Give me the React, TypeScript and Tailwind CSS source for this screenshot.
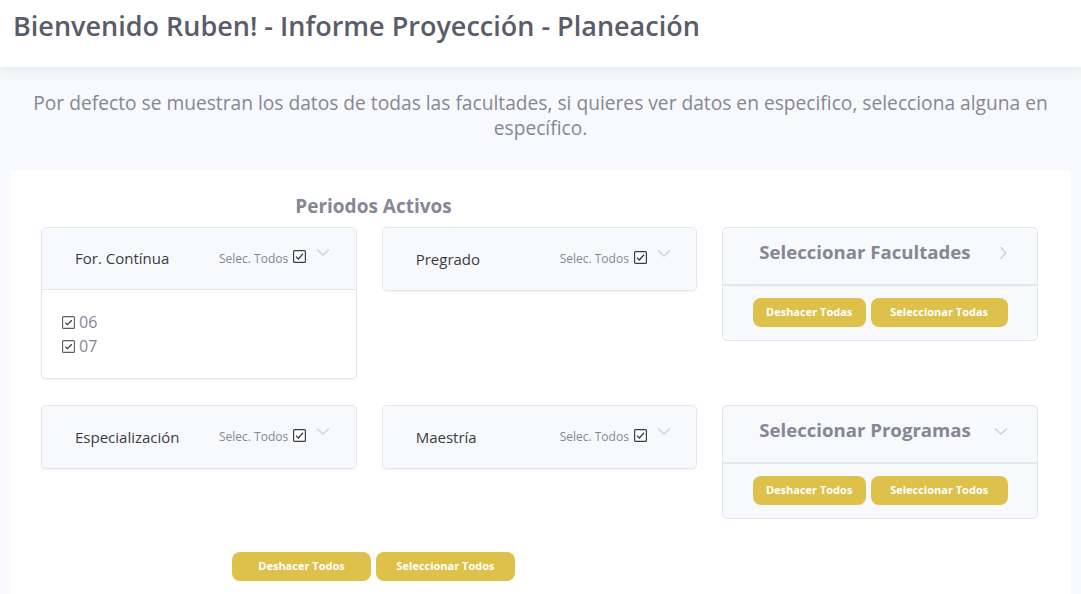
import React from "react";

const font = { fontFamily: "'Open Sans', 'Noto Sans', sans-serif" };

function Check() {
  return (
    <svg width="13" height="13" viewBox="0 0 13 13" className="shrink-0">
      <rect x="0.6" y="0.6" width="11.8" height="11.8" rx="1" fill="white" stroke="#3a3b45" strokeWidth="1.2" />
      <path d="M3 6.6 L5.4 9 L10 3.8" fill="none" stroke="#3a3b45" strokeWidth="1.3" />
    </svg>
  );
}

function SmallCheck() {
  return (
    <svg width="13" height="13" viewBox="0 0 13 13" className="shrink-0">
      <rect x="0.6" y="0.6" width="11.8" height="11.8" rx="1" fill="white" stroke="#5a5c69" strokeWidth="1.1" />
      <path d="M3.2 6.6 L5.4 8.7 L9.8 4.2" fill="none" stroke="#3a3b45" strokeWidth="1.3" />
    </svg>
  );
}

function ChevDown({ color = "#d1d3e2" }: { color?: string }) {
  return (
    <svg width="14" height="9" viewBox="0 0 14 9">
      <path d="M1 1.5 L7 7 L13 1.5" fill="none" stroke={color} strokeWidth="1.6" />
    </svg>
  );
}

function ChevRight() {
  return (
    <svg width="8" height="14" viewBox="0 0 8 14">
      <path d="M1.5 1 L6.5 7 L1.5 13" fill="none" stroke="#d1d3e2" strokeWidth="1.6" />
    </svg>
  );
}

function PeriodCard({ label, items }: { label: string; items?: string[] }) {
  return (
    <div className="rounded-[5px] border border-[#e3e6f0] bg-white overflow-hidden shadow-[0_1px_2px_rgba(0,0,0,0.06)]">
      <div className={"h-[62px] bg-[#f8f9fc] flex items-center pl-[33px] " + (items ? "border-b border-[#e3e6f0]" : "")}>
        <div className="w-[144px] text-[15px] text-[#3a3b45]">{label}</div>
        <div className="flex items-center">
          <span className="text-[12px] text-[#858796]">Selec. Todos</span>
          <span className="ml-[5px] -mt-[4px]"><Check /></span>
          <span className="ml-[10px] -mt-[12px]"><ChevDown /></span>
        </div>
      </div>
      {items && (
        <div className="px-[20px] pt-[20px] pb-[20px]">
          {items.map((it) => (
            <div key={it} className="flex items-center h-[24px] text-[16px] text-[#858796]">
              <SmallCheck />
              <span className="ml-[4px]">{it}</span>
            </div>
          ))}
        </div>
      )}
    </div>
  );
}

function Btn({ children, w }: { children: React.ReactNode; w: string }) {
  return (
    <div className={"h-[29px] rounded-[8px] bg-[#dec14b] flex items-center justify-center text-white font-bold text-[11px] " + w}>
      {children}
    </div>
  );
}

function SelectCard({ title, right, a, b, wa, wb }: { title: string; right: React.ReactNode; a: string; b: string; wa: string; wb: string }) {
  return (
    <div className="rounded-[5px] border border-[#e3e6f0] bg-[#f8f9fc] overflow-hidden">
      <div className="h-[58px] flex items-start pt-[10px] pl-[36px] border-b-2 border-[#e3e6f0]">
        <div className="text-[18.6px] leading-[28px] font-bold text-[#858796] w-[237px] whitespace-nowrap">{title}</div>
        <div className="pt-[8px]">{right}</div>
      </div>
      <div className="flex justify-center gap-[5px] pt-[12px] pb-[13px]">
        <Btn w={wa}>{a}</Btn>
        <Btn w={wb}>{b}</Btn>
      </div>
    </div>
  );
}

export default function App() {
  return (
    <div className="min-h-[594px] bg-[#f8f9fc]" style={font}>
      <div className="h-[67px] bg-white shadow-[0_4px_12px_rgba(58,59,69,0.08)] relative z-10 px-[13px] pt-[8px]">
        <h1 className="text-[27px] font-semibold text-[#5a5c69] leading-[36px] whitespace-nowrap">
          Bienvenido Ruben! - Informe Proyección - Planeación
        </h1>
      </div>
      <p className="text-center text-[19.2px] leading-[25px] text-[#858796] px-[20px] pt-[23px]">
        Por defecto se muestran los datos de todas las facultades, si quieres ver datos en especifico, selecciona alguna en específico.
      </p>
      <div className="mx-[10px] mt-[30px] bg-white pl-[31px] pr-[33px] pt-[24px] pb-[20px]">
        <div className="w-[665px] text-center text-[19px] font-bold text-[#858796] leading-[25px] mb-[8px]">
          Periodos Activos
        </div>
        <div className="grid grid-cols-3 gap-x-[25px] gap-y-[26px] items-start">
          <PeriodCard label="For. Contínua" items={["06", "07"]} />
          <PeriodCard label="Pregrado" />
          <SelectCard title="Seleccionar Facultades" right={<span className="ml-[3px] block"><ChevRight /></span>} a="Deshacer Todas" b="Seleccionar Todas" wa="w-[113px]" wb="w-[137px]" />
          <PeriodCard label="Especialización" />
          <PeriodCard label="Maestría" />
          <SelectCard title="Seleccionar Programas" right={<span className="block pt-[3px] -ml-[2px]"><ChevDown /></span>} a="Deshacer Todos" b="Seleccionar Todos" wa="w-[113px]" wb="w-[137px]" />
        </div>
        <div className="w-[665px] flex justify-center gap-[5px] mt-[33px]">
          <Btn w="w-[139px]">Deshacer Todos</Btn>
          <Btn w="w-[139px]">Seleccionar Todos</Btn>
        </div>
      </div>
    </div>
  );
}
